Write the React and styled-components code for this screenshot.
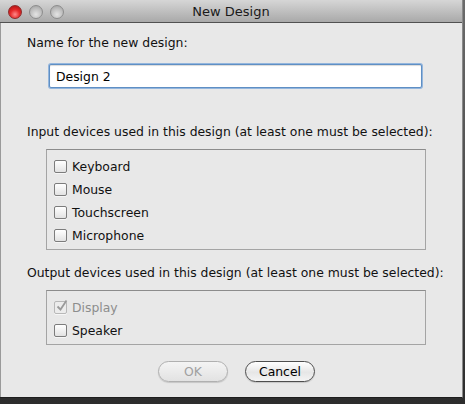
import React from 'react';
import styled, { createGlobalStyle } from 'styled-components';

const GlobalStyle = createGlobalStyle`
  html, body {
    margin: 0;
    padding: 0;
    background: #3a3a3a;
  }
  body {
    width: 465px;
    height: 404px;
    overflow: hidden;
    font-family: "Lucida Grande", "DejaVu Sans", sans-serif;
  }
`;

const Desktop = styled.div`
  width: 465px;
  height: 404px;
  background: linear-gradient(#6b6b6b, #2c2c2c);
`;

const Window = styled.div`
  width: 462px;
  height: 397px;
  border-right: 1px solid #8a8a8a;
  border-bottom: 1px solid #1e1e1e;
  display: flex;
  flex-direction: column;
  background: #e8e8e8;
`;

const TitleBar = styled.div`
  height: 22px;
  flex: none;
  position: relative;
  display: flex;
  align-items: center;
  justify-content: center;
  background: linear-gradient(#d6d6d6, #a9a9a9);
  border-bottom: 1px solid #515151;
  font-size: 13px;
  color: #1a1a1a;
`;

const Lights = styled.div`
  position: absolute;
  left: 8px;
  top: 5px;
  display: flex;
  gap: 7px;
`;

const Light = styled.span`
  width: 14px;
  height: 14px;
  border-radius: 50%;
  box-sizing: border-box;
  border: 1px solid ${p => (p.red ? '#8e2b2b' : '#8d8d8d')};
  background: ${p =>
    p.red
      ? 'radial-gradient(circle at 50% 70%, #ff8a8a 0%, #e62a2a 45%, #a41010 100%)'
      : 'radial-gradient(circle at 50% 70%, #e4e4e4 0%, #c2c2c2 50%, #9c9c9c 100%)'};
`;

const Body = styled.div`
  flex: 1;
  display: flex;
  flex-direction: column;
  padding: 12px 0 0 26px;
  border-left: 1px solid #9a9a9a;
  font-size: 12.4px;
  color: #111;
`;

const Label = styled.div`
  line-height: 16px;
  margin-bottom: ${p => p.gap || 0}px;
`;

const TextInput = styled.input`
  margin: 0 0 36px 22px;
  width: 373px;
  height: 24px;
  box-sizing: border-box;
  border: 1px solid #5f8fc4;
  border-radius: 2px;
  box-shadow: 0 0 0 1px #94b6dd, inset 0 1px 1px rgba(0, 0, 0, 0.15);
  padding: 0 6px;
  font: inherit;
  color: #000;
  background: #fff;
  outline: none;
`;

const Group = styled.div`
  margin: 0 0 ${p => p.mb}px 19px;
  width: 380px;
  box-sizing: border-box;
  border: 1px solid #a4a4a4;
  border-top-color: #8c8c8c;
  padding: 5px 0 2px 7px;
  display: flex;
  flex-direction: column;
`;

const Option = styled.label`
  height: 23px;
  display: flex;
  align-items: center;
  gap: 5px;
  color: ${p => (p.disabled ? '#8d8d8d' : '#111')};
`;

const Box = styled.span`
  width: 13px;
  height: 13px;
  box-sizing: border-box;
  border-radius: 2px;
  border: 1px solid ${p => (p.disabled ? '#b8b8b8' : '#7c7c7c')};
  background: ${p => (p.disabled ? '#ececec' : 'linear-gradient(#ffffff, #e2e2e2)')};
  box-shadow: 0 1px 0 rgba(255, 255, 255, 0.6);
  position: relative;
  flex: none;
`;

const Check = styled.svg`
  position: absolute;
  left: 0;
  top: -3px;
`;

const Buttons = styled.div`
  display: flex;
  gap: 17px;
  margin: 3px 0 0 131px;
`;

const Button = styled.button`
  width: 70px;
  height: 21px;
  border-radius: 11px;
  box-sizing: border-box;
  border: 1px solid ${p => (p.disabled ? '#b0b0b0' : '#4e4e4e')};
  background: ${p => (p.disabled ? 'linear-gradient(#f4f4f4, #e2e2e2)' : 'linear-gradient(#ffffff, #e6e6e6 55%, #f4f4f4)')};
  font: inherit;
  color: ${p => (p.disabled ? '#a0a0a0' : '#000')};
  padding: 0;
  box-shadow: 0 1px 1px rgba(0, 0, 0, 0.15);
`;

const CheckOption = ({ label, checked, disabled }) => (
  <Option disabled={disabled}>
    <Box disabled={disabled}>
      {checked && (
        <Check width="14" height="14" viewBox="0 0 14 14">
          <path d="M2.5 7.5 L5.5 10.5 L11.5 1.5" fill="none" stroke={disabled ? '#9a9a9a' : '#222'} strokeWidth="1.8" />
        </Check>
      )}
    </Box>
    {label}
  </Option>
);

const App = () => (
  <Desktop>
    <GlobalStyle />
    <Window>
      <TitleBar>
        <Lights>
          <Light red />
          <Light />
          <Light />
        </Lights>
        New Design
      </TitleBar>
      <Body>
        <Label gap={13}>Name for the new design:</Label>
        <TextInput defaultValue="Design 2" />
        <Label gap={9}>Input devices used in this design (at least one must be selected):</Label>
        <Group mb={15}>
          <CheckOption label="Keyboard" />
          <CheckOption label="Mouse" />
          <CheckOption label="Touchscreen" />
          <CheckOption label="Microphone" />
        </Group>
        <Label gap={9}>Output devices used in this design (at least one must be selected):</Label>
        <Group mb={13}>
          <CheckOption label="Display" checked disabled />
          <CheckOption label="Speaker" />
        </Group>
        <Buttons>
          <Button disabled>OK</Button>
          <Button>Cancel</Button>
        </Buttons>
      </Body>
    </Window>
  </Desktop>
);

export default App;
